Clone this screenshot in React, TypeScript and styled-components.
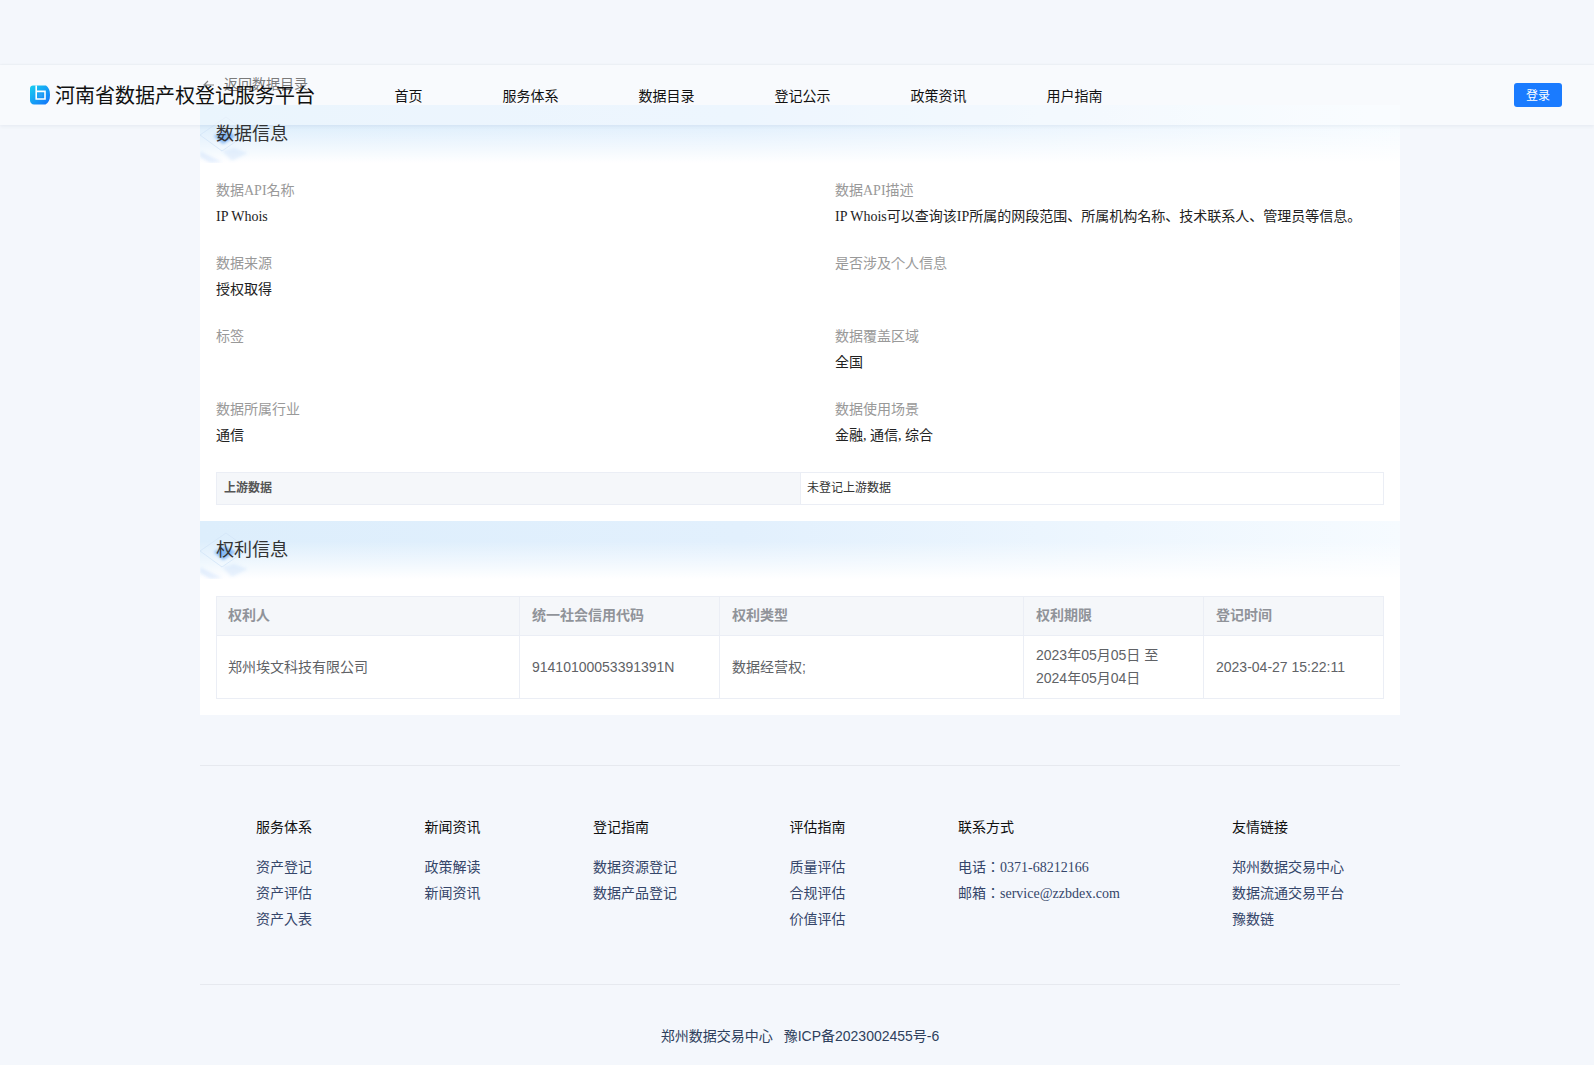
import React from "react";
import styled, { createGlobalStyle } from "styled-components";

const Global = createGlobalStyle`
  html, body { margin: 0; padding: 0; background: #f4f7fc; }
  body { font-family: "Liberation Serif", "Noto Sans CJK JP", serif; color: #333; }
  * { box-sizing: border-box; }
`;

const Page = styled.div`
  position: relative;
  height: 1065px;
  overflow: hidden;
`;

const Header = styled.header`
  position: absolute;
  top: 65px;
  left: 0;
  right: 0;
  height: 60px;
  display: flex;
  align-items: center;
  padding: 0 32px 0 30px;
  background: rgba(255, 255, 255, 0.4);
  box-shadow: 0 1px 4px rgba(40, 60, 100, 0.08), 0 -1px 0 #f0f3f8;
  z-index: 5;
`;

const Brand = styled.div`
  display: flex;
  align-items: center;
  gap: 5px;
  width: 364.5px;
  font-size: 20px;
  color: #111;
  margin-top: -2px;
`;

const LogoMark = styled.svg`
  margin-top: 2px;
  flex: none;
`;

const Nav = styled.nav`
  display: flex;
  gap: 80px;
  flex: 1;
  margin-top: 3px;
`;

const NavItem = styled.a`
  font-size: 14px;
  line-height: 20px;
  color: #111;
`;

const LoginButton = styled.button`
  width: 48px;
  height: 24px;
  border: 0;
  padding: 0;
  border-radius: 3px;
  background: #1a7bff;
  color: #fff;
  font: 12px "Liberation Serif", "Noto Sans CJK JP", serif;
`;

const Main = styled.main`
  width: 1200px;
  margin-left: 200px;
  padding-top: 76px;
`;

const BackRow = styled.div`
  height: 18px;
  margin-bottom: 11px;
  display: flex;
  align-items: center;
  gap: 9px;
  padding-left: 3px;
  font-size: 14px;
  color: #222;
  line-height: 18px;
`;

const Panel = styled.section`
  background: #fff;
  padding-bottom: 16px;
`;

const Banner = styled.div`
  position: relative;
  height: 58px;
  padding: 16px 16px 0;
  font-size: 18px;
  line-height: 26px;
  color: #333;
  background:
    linear-gradient(to bottom, rgba(255, 255, 255, 0) 35%, rgba(255, 255, 255, 0.55) 72%, #fff 100%),
    linear-gradient(to right, #ddeefc 0%, #e2f0fd 45%, #f6fbff 100%);
`;

const BannerArt = styled.svg`
  position: absolute;
  left: 0;
  top: 10px;
  width: 56px;
  height: 48px;
`;

const BannerText = styled.span`
  position: relative;
`;

const InfoGrid = styled.div`
  display: grid;
  grid-template-columns: 619px 1fr;
  grid-auto-rows: 73px;
  padding: 15px 16px 0;
`;

const InfoItem = styled.div`
  font-size: 14px;
`;

const InfoLabel = styled.div`
  line-height: 26px;
  color: #999;
`;

const InfoValue = styled.div`
  line-height: 26px;
  color: #222;
  min-height: 26px;
`;

const Upstream = styled.div`
  display: grid;
  grid-template-columns: 584px 1fr;
  height: 33px;
  margin: 2px 16px 16px;
  border: 1px solid #ebeef5;
  font-size: 12px;
  line-height: 31px;
`;

const UpstreamKey = styled.div`
  padding-left: 7px;
  background: #f5f7fa;
  border-right: 1px solid #ebeef5;
  font-weight: 700;
  color: #555;
`;

const UpstreamValue = styled.div`
  padding-left: 6px;
  color: #333;
`;

const RightsTable = styled.table`
  width: 1167px;
  margin: 17px 16px 0;
  border-collapse: collapse;
  table-layout: fixed;
  font: 14px/23px "Liberation Sans", "Noto Sans CJK JP", sans-serif;
`;

const Th = styled.th`
  height: 39px;
  padding: 7px 11px 8px 12px;
  background: #f5f7fa;
  border: 1px solid #ebeef5;
  color: #909399;
  text-align: left;
  font-weight: 700;
  &:first-child {
    padding-left: 11px;
  }
`;

const Td = styled.td`
  height: 63px;
  padding: 8px 11px 8px 12px;
  border: 1px solid #ebeef5;
  color: #606266;
  &:first-child {
    padding-left: 11px;
  }
`;

const Rule = styled.hr`
  border: 0;
  height: 1px;
  margin: 0;
  background: #e6e9ef;
`;

const FooterRule = styled(Rule)`
  margin-top: 50px;
`;

const FooterColumns = styled.div`
  display: grid;
  grid-template-columns: 168.5px 168.5px 196.5px 168.5px 274px 1fr;
  padding: 49px 0 0 56px;
  height: 218px;
  font-size: 14px;
`;

const FooterHead = styled.div`
  line-height: 26px;
  color: #111;
  margin-bottom: 14px;
`;

const FooterLink = styled.div`
  line-height: 26px;
  color: #35466a;
`;

const Copyright = styled.div`
  display: flex;
  justify-content: center;
  gap: 11px;
  padding-top: 41px;
  font: 14px/20px "Liberation Sans", "Noto Sans CJK JP", sans-serif;
  color: #2e3f5c;
`;

const Logo = () => (
  <LogoMark width="20" height="20" viewBox="0 0 20 20">
    <defs>
      <linearGradient id="lg" x1="0" y1="0" x2="1" y2="1">
        <stop offset="0" stopColor="#17d0f0" />
        <stop offset="1" stopColor="#1470fa" />
      </linearGradient>
    </defs>
    <path d="M3 0.5H16C18.4 2 20 5 20 10C20 15 18.4 18 15.5 19.5H4C1.8 19.5 0 17.8 0 15.5V3.5C0 1.8 1.3 0.5 3 0.5Z" fill="url(#lg)" />
    <path d="M6.2 0.5V14H15V6.4H6.2" fill="none" stroke="#fff" strokeWidth="1.6" />
    <rect x="8.5" y="8.4" width="4" height="3.4" fill="#2f9ff5" />
  </LogoMark>
);

const Art = ({ id }: { id: string }) => (
  <BannerArt viewBox="0 0 56 48">
    <defs>
      <filter id={id} x="-20%" y="-20%" width="140%" height="140%">
        <feGaussianBlur stdDeviation="1.5" />
      </filter>
    </defs>
    <g fill="#5e9ff0" filter={`url(#${id})`}>
      <polygon points="14,21 25,15 36,21 23,29" opacity="0.7" />
      <polygon points="0,36 12,42 22,47 10,48 0,42" opacity="0.14" />
      <polygon points="22,36 34,33 48,38 32,46" opacity="0.12" />
    </g>
    <g fill="none" stroke="#d3e5f8" strokeWidth="0.8">
      <polygon points="0,20 26,2 48,18 22,36" />
    </g>
  </BannerArt>
);

type Field = { label: string; value?: string };

const fields: Field[] = [
  { label: "数据API名称", value: "IP Whois" },
  { label: "数据API描述", value: "IP Whois可以查询该IP所属的网段范围、所属机构名称、技术联系人、管理员等信息。" },
  { label: "数据来源", value: "授权取得" },
  { label: "是否涉及个人信息" },
  { label: "标签" },
  { label: "数据覆盖区域", value: "全国" },
  { label: "数据所属行业", value: "通信" },
  { label: "数据使用场景", value: "金融, 通信, 综合" },
];

const columns: [string, number][] = [
  ["权利人", 303],
  ["统一社会信用代码", 200],
  ["权利类型", 304],
  ["权利期限", 180],
  ["登记时间", 180],
];

const footerColumns: { head: string; links: string[] }[] = [
  { head: "服务体系", links: ["资产登记", "资产评估", "资产入表"] },
  { head: "新闻资讯", links: ["政策解读", "新闻资讯"] },
  { head: "登记指南", links: ["数据资源登记", "数据产品登记"] },
  { head: "评估指南", links: ["质量评估", "合规评估", "价值评估"] },
  { head: "联系方式", links: ["电话：0371-68212166", "邮箱：service@zzbdex.com"] },
  { head: "友情链接", links: ["郑州数据交易中心", "数据流通交易平台", "豫数链"] },
];

export default function App() {
  return (
    <Page>
      <Global />
      <Header>
        <Brand>
          <Logo />
          河南省数据产权登记服务平台
        </Brand>
        <Nav>
          {["首页", "服务体系", "数据目录", "登记公示", "政策资讯", "用户指南"].map((n) => (
            <NavItem key={n}>{n}</NavItem>
          ))}
        </Nav>
        <LoginButton>登录</LoginButton>
      </Header>
      <Main>
        <BackRow>
          <svg width="12" height="10" viewBox="0 0 12 10" fill="none" stroke="#333" strokeWidth="1.2">
            <path d="M11 5H1M5 1L1 5L5 9" />
          </svg>
          返回数据目录
        </BackRow>
        <Panel>
          <Banner>
            <Art id="art-a" />
            <BannerText>数据信息</BannerText>
          </Banner>
          <InfoGrid>
            {fields.map((f) => (
              <InfoItem key={f.label}>
                <InfoLabel>{f.label}</InfoLabel>
                <InfoValue>{f.value}</InfoValue>
              </InfoItem>
            ))}
          </InfoGrid>
          <Upstream>
            <UpstreamKey>上游数据</UpstreamKey>
            <UpstreamValue>未登记上游数据</UpstreamValue>
          </Upstream>
          <Banner>
            <Art id="art-b" />
            <BannerText>权利信息</BannerText>
          </Banner>
          <RightsTable>
            <colgroup>
              {columns.map(([name, w]) => (
                <col key={name} width={w} />
              ))}
            </colgroup>
            <thead>
              <tr>
                {columns.map(([name]) => (
                  <Th key={name}>{name}</Th>
                ))}
              </tr>
            </thead>
            <tbody>
              <tr>
                <Td>郑州埃文科技有限公司</Td>
                <Td>91410100053391391N</Td>
                <Td>数据经营权;</Td>
                <Td>2023年05月05日 至 2024年05月04日</Td>
                <Td>2023-04-27 15:22:11</Td>
              </tr>
            </tbody>
          </RightsTable>
        </Panel>
        <FooterRule />
        <FooterColumns>
          {footerColumns.map((c) => (
            <div key={c.head}>
              <FooterHead>{c.head}</FooterHead>
              {c.links.map((l) => (
                <FooterLink key={l}>{l}</FooterLink>
              ))}
            </div>
          ))}
        </FooterColumns>
        <Rule />
        <Copyright>
          <span>郑州数据交易中心</span>
          <span>豫ICP备2023002455号-6</span>
        </Copyright>
      </Main>
    </Page>
  );
}
